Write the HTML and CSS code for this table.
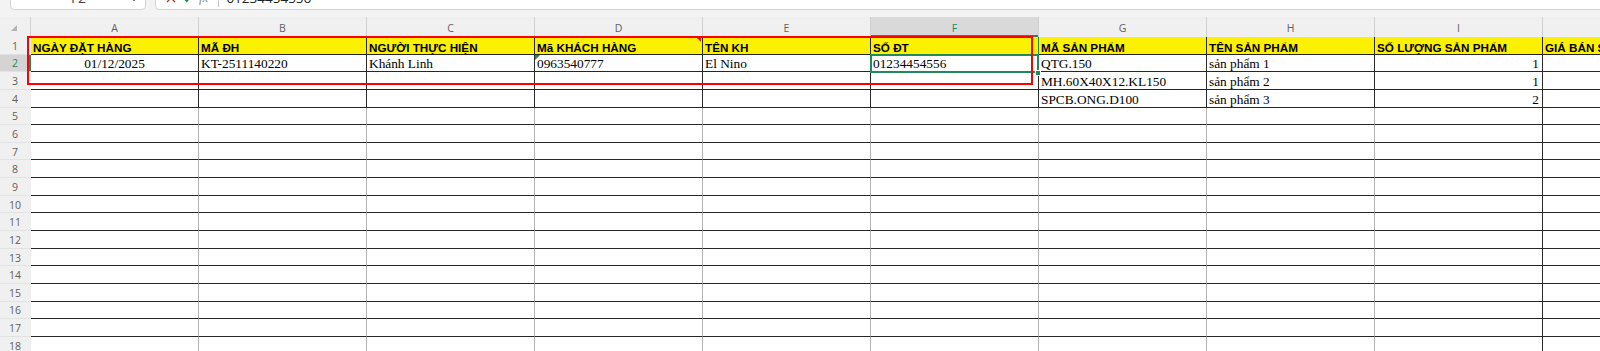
FILE: index.html
```html
<!DOCTYPE html>
<html lang="vi">
<head>
<meta charset="utf-8">
<title>Sheet</title>
<link rel="stylesheet" href="styles.css">
</head>
<body>
<div class="app">
  <div class="toolbar">
    <div class="namebox">
      <span class="nb-text">F2</span>
      <svg class="chev" width="8" height="5" viewBox="0 0 8 5"><path d="M0.5 0.5 L4 4 L7.5 0.5" fill="none" stroke="#777" stroke-width="1"/></svg>
    </div>
    <div class="fbar">
      <svg class="fx-x" width="10" height="10" viewBox="0 0 10 10"><path d="M1 1 L9 9 M9 1 L1 9" stroke="#c42b1c" stroke-width="1.3" fill="none"/></svg>
      <svg class="fx-ok" width="10" height="10" viewBox="0 0 10 10"><path d="M1 5.5 L3.8 8.5 L9 1.5" stroke="#138a4a" stroke-width="1.3" fill="none"/></svg>
      <span class="fx">fx</span>
      <span class="fsep"></span>
      <span class="ftext">01234454556</span>
    </div>
  </div>

  <div class="sheet">
    <div class="colhead">
      <div class="corner"><svg width="6" height="6" viewBox="0 0 6 6"><polygon points="6,0 6,6 0,6" fill="#b4b4b4"/></svg></div>
      <div class="ch">A</div>
      <div class="ch">B</div>
      <div class="ch">C</div>
      <div class="ch">D</div>
      <div class="ch">E</div>
      <div class="ch sel">F</div>
      <div class="ch">G</div>
      <div class="ch">H</div>
      <div class="ch">I</div>
      <div class="ch">J</div>
    </div>

    <div class="row data hdr">
      <div class="rh">1</div>
      <div class="c">NGÀY ĐẶT HÀNG</div>
      <div class="c">MÃ ĐH</div>
      <div class="c">NGƯỜI THỰC HIỆN</div>
      <div class="c has-note">Mã KHÁCH HÀNG<span class="note"></span></div>
      <div class="c">TÊN KH</div>
      <div class="c fsel">SỐ ĐT</div>
      <div class="c">MÃ SẢN PHẨM</div>
      <div class="c">TÊN SẢN PHẨM</div>
      <div class="c">SỐ LƯỢNG SẢN PHẨM</div>
      <div class="c">GIÁ BÁN SẢN PHẨM</div>
    </div>
    <div class="row data">
      <div class="rh sel">2</div>
      <div class="c center">01/12/2025</div>
      <div class="c">KT-2511140220</div>
      <div class="c">Khánh Linh</div>
      <div class="c has-note">0963540777<span class="txtflag"></span></div>
      <div class="c">El Nino</div>
      <div class="c">01234454556</div>
      <div class="c">QTG.150</div>
      <div class="c">sản phẩm 1</div>
      <div class="c right">1</div>
      <div class="c"></div>
    </div>
    <div class="row data">
      <div class="rh">3</div>
      <div class="c"></div>
      <div class="c"></div>
      <div class="c"></div>
      <div class="c"></div>
      <div class="c"></div>
      <div class="c"></div>
      <div class="c">MH.60X40X12.KL150</div>
      <div class="c">sản phẩm 2</div>
      <div class="c right">1</div>
      <div class="c"></div>
    </div>
    <div class="row data">
      <div class="rh">4</div>
      <div class="c"></div>
      <div class="c"></div>
      <div class="c"></div>
      <div class="c"></div>
      <div class="c"></div>
      <div class="c"></div>
      <div class="c">SPCB.ONG.D100</div>
      <div class="c">sản phẩm 3</div>
      <div class="c right">2</div>
      <div class="c"></div>
    </div>
    <div class="row"><div class="rh">5</div><div class="c"></div><div class="c"></div><div class="c"></div><div class="c"></div><div class="c"></div><div class="c"></div><div class="c"></div><div class="c"></div><div class="c ci"></div><div class="c"></div></div>
    <div class="row"><div class="rh">6</div><div class="c"></div><div class="c"></div><div class="c"></div><div class="c"></div><div class="c"></div><div class="c"></div><div class="c"></div><div class="c"></div><div class="c ci"></div><div class="c"></div></div>
    <div class="row"><div class="rh">7</div><div class="c"></div><div class="c"></div><div class="c"></div><div class="c"></div><div class="c"></div><div class="c"></div><div class="c"></div><div class="c"></div><div class="c ci"></div><div class="c"></div></div>
    <div class="row"><div class="rh">8</div><div class="c"></div><div class="c"></div><div class="c"></div><div class="c"></div><div class="c"></div><div class="c"></div><div class="c"></div><div class="c"></div><div class="c ci"></div><div class="c"></div></div>
    <div class="row"><div class="rh">9</div><div class="c"></div><div class="c"></div><div class="c"></div><div class="c"></div><div class="c"></div><div class="c"></div><div class="c"></div><div class="c"></div><div class="c ci"></div><div class="c"></div></div>
    <div class="row"><div class="rh">10</div><div class="c"></div><div class="c"></div><div class="c"></div><div class="c"></div><div class="c"></div><div class="c"></div><div class="c"></div><div class="c"></div><div class="c ci"></div><div class="c"></div></div>
    <div class="row"><div class="rh">11</div><div class="c"></div><div class="c"></div><div class="c"></div><div class="c"></div><div class="c"></div><div class="c"></div><div class="c"></div><div class="c"></div><div class="c ci"></div><div class="c"></div></div>
    <div class="row"><div class="rh">12</div><div class="c"></div><div class="c"></div><div class="c"></div><div class="c"></div><div class="c"></div><div class="c"></div><div class="c"></div><div class="c"></div><div class="c ci"></div><div class="c"></div></div>
    <div class="row"><div class="rh">13</div><div class="c"></div><div class="c"></div><div class="c"></div><div class="c"></div><div class="c"></div><div class="c"></div><div class="c"></div><div class="c"></div><div class="c ci"></div><div class="c"></div></div>
    <div class="row"><div class="rh">14</div><div class="c"></div><div class="c"></div><div class="c"></div><div class="c"></div><div class="c"></div><div class="c"></div><div class="c"></div><div class="c"></div><div class="c ci"></div><div class="c"></div></div>
    <div class="row"><div class="rh">15</div><div class="c"></div><div class="c"></div><div class="c"></div><div class="c"></div><div class="c"></div><div class="c"></div><div class="c"></div><div class="c"></div><div class="c ci"></div><div class="c"></div></div>
    <div class="row"><div class="rh">16</div><div class="c"></div><div class="c"></div><div class="c"></div><div class="c"></div><div class="c"></div><div class="c"></div><div class="c"></div><div class="c"></div><div class="c ci"></div><div class="c"></div></div>
    <div class="row"><div class="rh">17</div><div class="c"></div><div class="c"></div><div class="c"></div><div class="c"></div><div class="c"></div><div class="c"></div><div class="c"></div><div class="c"></div><div class="c ci"></div><div class="c"></div></div>
    <div class="row"><div class="rh">18</div><div class="c"></div><div class="c"></div><div class="c"></div><div class="c"></div><div class="c"></div><div class="c"></div><div class="c"></div><div class="c"></div><div class="c ci"></div><div class="c"></div></div>

    <div class="selection"></div>
    <div class="fillhandle"></div>
    <div class="markup"></div>
  </div>
</div>
</body>
</html>
```

FILE: styles.css
```css
html, body {
  margin: 0;
  padding: 0;
  background: #ffffff;
}

.app {
  width: 1600px;
  height: 351px;
  overflow: hidden;
  background: #ffffff;
  font-family: "Open Sans", "Liberation Sans", sans-serif;
}

/* ---------- formula bar strip ---------- */
.toolbar {
  height: 17px;
  background: #f3f3f3;
  display: flex;
  overflow: hidden;
}

.namebox {
  flex: none;
  margin: -18px 0 0 10px;
  width: 136px;
  height: 28px;
  box-sizing: border-box;
  border: 1px solid #d4d4d4;
  border-radius: 4px;
  background: #ffffff;
  display: flex;
  align-items: flex-end;
  padding: 0 0 3px 0;
}

.nb-text {
  flex: 1;
  text-align: center;
  padding-left: 16px;
  font-size: 14px;
  line-height: 16px;
  color: #444;
}

.chev {
  flex: none;
  margin: 0 7px 4px 0;
}

.fbar {
  flex: 1;
  margin: -18px -10px 0 9px;
  height: 28px;
  box-sizing: border-box;
  border: 1px solid #d4d4d4;
  border-radius: 4px;
  background: #ffffff;
  display: flex;
  align-items: flex-end;
  padding-bottom: 3px;
}

.fx-x {
  flex: none;
  margin: 0 0 3px 10px;
}

.fx-ok {
  flex: none;
  margin: 0 0 3px 7px;
}

.fx {
  margin-left: 6px;
  font-family: "Liberation Serif", serif;
  font-style: italic;
  font-size: 13px;
  line-height: 16px;
  color: #8a8a8a;
}

.fsep {
  width: 1px;
  height: 18px;
  margin: 0 0 -1px 10px;
  background: #c8c8c8;
}

.ftext {
  margin-left: 7px;
  font-size: 13.5px;
  line-height: 16px;
  color: #222;
}

/* ---------- sheet ---------- */
.sheet {
  position: relative;
}

.colhead {
  display: flex;
  height: 20px;
}

.corner {
  flex: none;
  width: 31px;
  box-sizing: border-box;
  background: #f0f0f0;
  border-right: 1px solid #d0d0d0;
  display: flex;
  align-items: flex-end;
  justify-content: flex-end;
  padding: 0 13px 6px 0;
}

.ch {
  flex: none;
  width: 168px;
  box-sizing: border-box;
  background: #f0f0f0;
  border-right: 1px solid #cfcfcf;
  display: flex;
  align-items: center;
  justify-content: center;
  padding-top: 2px;
  font-size: 10.5px;
  line-height: 14px;
  color: #616161;
}

.ch.sel {
  background: #d9d9d9;
  color: #1f8a5a;
  box-shadow: inset 0 -2px 0 #1f8a5a;
}

.row {
  display: flex;
  height: 17.65px;
}

.rh {
  flex: none;
  width: 31px;
  box-sizing: border-box;
  background: #f0f0f0;
  border-bottom: 1px solid #e2e2e2;
  display: flex;
  align-items: center;
  justify-content: center;
  padding: 1px 1px 0 0;
  font-size: 10.5px;
  line-height: 14px;
  color: #616161;
}

.rh.sel {
  background: #d4d4d4;
  color: #1f8a5a;
  box-shadow: inset -2px 0 0 #1f8a5a;
}

.c {
  flex: none;
  width: 168px;
  box-sizing: border-box;
  border-right: 1px solid #b4b4b4;
  border-bottom: 1px solid #262626;
  display: flex;
  align-items: flex-end;
  padding: 0 2px;
  font-family: "Liberation Serif", "Times New Roman", serif;
  font-size: 13.33px;
  line-height: 15px;
  color: #000;
  white-space: nowrap;
}

.data .c {
  border-right-color: #2a2a2a;
}

.c.ci {
  border-right-color: #2a2a2a;
}

.hdr .c {
  background: #fcf100;
  font-family: "Liberation Sans", Arial, sans-serif;
  font-weight: bold;
  font-size: 11.7px;
  line-height: 13px;
}

.hdr .c.fsel {
  border-right-color: #1f8a5a;
}

.c.center {
  justify-content: center;
}

.c.right {
  justify-content: flex-end;
  padding-right: 3px;
}

.has-note {
  position: relative;
}

.note {
  position: absolute;
  top: 0;
  right: 1px;
  width: 0;
  height: 0;
  border-top: 5px solid #e0201a;
  border-left: 5px solid transparent;
}

.txtflag {
  position: absolute;
  top: 0;
  left: 0;
  width: 0;
  height: 0;
  border-top: 5px solid #1f8a4a;
  border-right: 5px solid transparent;
}

/* ---------- overlays ---------- */
.selection {
  position: absolute;
  left: 869.5px;
  top: 37.3px;
  width: 169.5px;
  height: 18.7px;
  box-sizing: border-box;
  border: 2px solid #1f8a5a;
}

.fillhandle {
  position: absolute;
  left: 1034.5px;
  top: 52.5px;
  width: 6px;
  height: 6px;
  box-sizing: border-box;
  background: #1f8a5a;
  border: 1px solid #ffffff;
}

.markup {
  position: absolute;
  left: 26.5px;
  top: 19px;
  width: 1006px;
  height: 49.3px;
  box-sizing: border-box;
  border: 2px solid #ff0000;
}
```
